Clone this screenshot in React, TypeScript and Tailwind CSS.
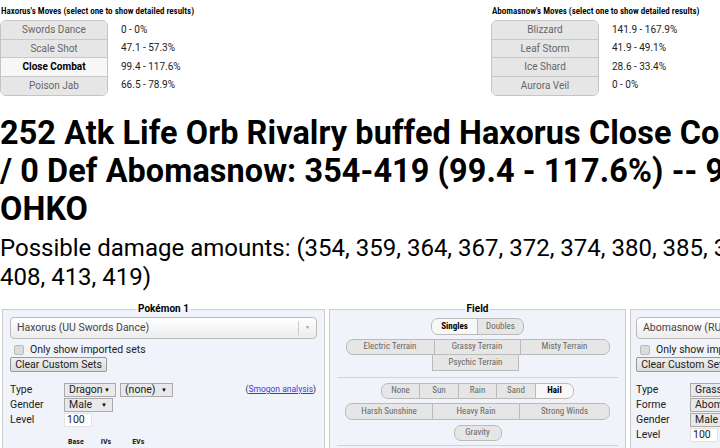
import React from "react";

const cond = "font-['Roboto_Condensed','Liberation_Sans_Narrow',Roboto,sans-serif] font-stretch-condensed";

type MoveTableProps = {
  title: string;
  moves: string[];
  pcts: string[];
  selected?: number;
};

function MoveTable({ title, moves, pcts, selected }: MoveTableProps) {
  return (
    <div>
      <div className={`${cond} mb-[3px] pl-[1px] text-[9px] leading-[12px] font-semibold text-black`}>{title}</div>
      <div className="flex">
        <div className="flex w-[108px] flex-col overflow-hidden rounded-[6px] border border-[#c4c4c4]">
          {moves.map((m, i) => (
            <div
              key={m}
              className={`flex h-[18.5px] items-center justify-center border-b border-[#c8c8c8] text-[10px] last:border-b-0 ${
                i === selected ? "bg-[#f7f7f7] font-bold text-black" : "bg-[#e6e6e6] text-[#666]"
              }`}
            >
              {m}
            </div>
          ))}
        </div>
        <div className="ml-[13px] flex flex-col">
          {pcts.map((p, i) => (
            <div key={i} className="flex h-[18.5px] items-center text-[10px] text-[#222]">
              {p}
            </div>
          ))}
        </div>
      </div>
    </div>
  );
}

function Dropdown({ label, width }: { label: string; width: string }) {
  return (
    <div className={`flex h-[14px] ${width} items-center justify-between border border-[#aaa] bg-[#e9e9e9] pl-[4px] pr-[5px] text-[10.5px] text-[#222]`}>
      <span className="whitespace-nowrap">{label}</span>
      <span className="text-[6px] text-black">▼</span>
    </div>
  );
}

type ToggleProps = {
  items: string[];
  widths: string[];
  selected?: number;
  rounded?: boolean;
};

function ToggleGroup({ items, widths, selected, rounded = true }: ToggleProps) {
  return (
    <div className="flex justify-center">
      {items.map((it, i) => {
        const first = i === 0;
        const last = i === items.length - 1;
        return (
          <div
            key={it}
            className={`flex h-[16.5px] ${widths[i]} items-center justify-center border border-[#bbb] text-[9px] ${cond} ${
              first ? "" : "-ml-px"
            } ${rounded && first ? "rounded-l-[7px]" : ""} ${rounded && last ? "rounded-r-[7px]" : ""} ${
              i === selected ? "bg-[#f8f8f8] font-bold text-black" : "bg-[#e6e6e6] text-[#666]"
            }`}
          >
            {it}
          </div>
        );
      })}
    </div>
  );
}

function SetSelect({ name }: { name: string }) {
  return (
    <div className="flex h-[22px] items-center rounded-[4px] border border-[#bbb] bg-gradient-to-b from-white to-[#ececec]">
      <span className="flex-1 truncate pl-[6px] text-[10.5px] text-[#444]">{name}</span>
      <span className="flex h-[14px] w-[18px] items-center justify-center border-l border-[#ccc] text-[5px] text-[#999]">▼</span>
    </div>
  );
}

function ImportedAndClear() {
  return (
    <>
      <div className="mt-[4px] flex h-[14px] items-center pl-[4px] text-[10.5px] leading-[14px] text-[#222]">
        <span className="h-[10px] w-[10px] rounded-[2px] border border-[#bbb] bg-[#dcdcdc]" />
        <span className="ml-[6px]">Only show imported sets</span>
      </div>
      <div className="flex h-[15px] w-[97px] items-center justify-center whitespace-nowrap rounded-[2px] border border-[#999] bg-gradient-to-b from-[#efefef] to-[#dcdcdc] text-[10.5px] text-[#222]">
        Clear Custom Sets
      </div>
    </>
  );
}

function Row({ label, children }: { label: string; children: React.ReactNode }) {
  return (
    <div className="flex h-[15px] items-center text-[10.5px] text-[#222]">
      <span className="w-[54px]">{label}</span>
      <div className="flex gap-[4px]">{children}</div>
    </div>
  );
}

function LevelInput() {
  return <div className="flex h-[14px] w-[28px] items-center border border-[#e2e2e2] bg-white pl-[2px] text-[10.5px] text-[#222]">100</div>;
}

export default function App() {
  const haxMoves = ["Swords Dance", "Scale Shot", "Close Combat", "Poison Jab"];
  const haxPcts = ["0 - 0%", "47.1 - 57.3%", "99.4 - 117.6%", "66.5 - 78.9%"];
  const abomaMoves = ["Blizzard", "Leaf Storm", "Ice Shard", "Aurora Veil"];
  const abomaPcts = ["141.9 - 167.9%", "41.9 - 49.1%", "28.6 - 33.4%", "0 - 0%"];

  return (
    <div className="h-[448px] w-[720px] overflow-hidden bg-white font-['Roboto',sans-serif] text-black">
      <div className="w-[1100px]">
        <div className="flex pt-[5px]">
          <div className="w-[491px]">
            <MoveTable title="Haxorus's Moves (select one to show detailed results)" moves={haxMoves} pcts={haxPcts} selected={2} />
          </div>
          <MoveTable title="Abomasnow's Moves (select one to show detailed results)" moves={abomaMoves} pcts={abomaPcts} />
        </div>

        <h2 className="mt-[18px] text-[32.4px] leading-[38px] font-bold tracking-[0.1px]">
          252 Atk Life Orb Rivalry buffed Haxorus Close Combat vs. 0 HP
          <br />/ 0 Def Abomasnow: 354-419 (99.4 - 117.6%) -- 93.8% chance to
          <br />
          OHKO
        </h2>
        <p className="mt-[6px] text-[24px] leading-[29px]">
          Possible damage amounts: (354, 359, 364, 367, 372, 374, 380, 385, 390, 392, 397, 400, 403,
          <br />
          408, 413, 419)
        </p>

        <div className="mt-[11px] flex gap-[4px] pl-[2px]">
          <fieldset className="h-[160px] w-[323px] border border-[#ccc] bg-[#f0f4fa] px-[7px] pt-[2px]">
            <legend className="mx-auto px-[2px] text-[10px] leading-[12px] font-bold">Pokémon 1</legend>
            <SetSelect name="Haxorus (UU Swords Dance)" />
            <ImportedAndClear />
            <div className="mt-[10px] flex items-start">
              <div className="flex-1">
                <Row label="Type">
                  <Dropdown label="Dragon" width="w-[52px]" />
                  <Dropdown label="(none)" width="w-[53px]" />
                </Row>
                <Row label="Gender">
                  <Dropdown label="Male" width="w-[49px]" />
                </Row>
                <Row label="Level">
                  <LevelInput />
                </Row>
              </div>
              <div className="pr-[1px] text-[8.5px] leading-[14px] text-[#222]">
                (<span className="text-[#3b3bdd] underline">Smogon analysis</span>)
              </div>
            </div>
            <div className={`${cond} mt-[9px] flex text-[8px] font-bold text-[#222]`}>
              <span className="ml-[58px]">Base</span>
              <span className="ml-[17px]">IVs</span>
              <span className="ml-[21px]">EVs</span>
            </div>
          </fieldset>

          <fieldset className="h-[160px] w-[297px] border border-[#ccc] bg-[#f0f4fa] px-[7px] pt-[3px]">
            <legend className="mx-auto px-[2px] text-[10px] leading-[12px] font-bold">Field</legend>
            <ToggleGroup items={["Singles", "Doubles"]} widths={["w-[47px]", "w-[47px]"]} selected={0} />
            <div className="mt-[4px]">
              <ToggleGroup items={["Electric Terrain", "Grassy Terrain", "Misty Terrain"]} widths={["w-[89px]", "w-[87px]", "w-[90px]"]} />
            </div>
            <div className="-mt-px pr-[4px]">
              <ToggleGroup items={["Psychic Terrain"]} widths={["w-[87px]"]} rounded={false} />
            </div>
            <div className="mt-[6px] h-px bg-[#d2d2d2]" />
            <div className="mt-[5px]">
              <ToggleGroup items={["None", "Sun", "Rain", "Sand", "Hail"]} widths={["w-[39px]", "w-[40px]", "w-[39px]", "w-[40px]", "w-[39px]"]} selected={4} />
            </div>
            <div className="mt-[4px]">
              <ToggleGroup items={["Harsh Sunshine", "Heavy Rain", "Strong Winds"]} widths={["w-[88px]", "w-[88px]", "w-[91px]"]} />
            </div>
            <div className="mt-[5px]">
              <ToggleGroup items={["Gravity"]} widths={["w-[48px]"]} />
            </div>
            <div className="mt-[4px] h-px bg-[#d2d2d2]" />
          </fieldset>

          <fieldset className="h-[160px] w-[323px] border border-[#ccc] bg-[#f0f4fa] px-[5px] pt-[2px]">
            <legend className="mx-auto px-[2px] text-[10px] leading-[12px] font-bold">Pokémon 2</legend>
            <SetSelect name="Abomasnow (RU Choice Specs)" />
            <ImportedAndClear />
            <div className="mt-[10px]">
              <Row label="Type">
                <Dropdown label="Grass" width="w-[52px]" />
                <Dropdown label="Ice" width="w-[53px]" />
              </Row>
              <Row label="Forme">
                <Dropdown label="Abomasnow" width="w-[80px]" />
              </Row>
              <Row label="Gender">
                <Dropdown label="Male" width="w-[49px]" />
              </Row>
              <Row label="Level">
                <LevelInput />
              </Row>
            </div>
          </fieldset>
        </div>
      </div>
    </div>
  );
}
